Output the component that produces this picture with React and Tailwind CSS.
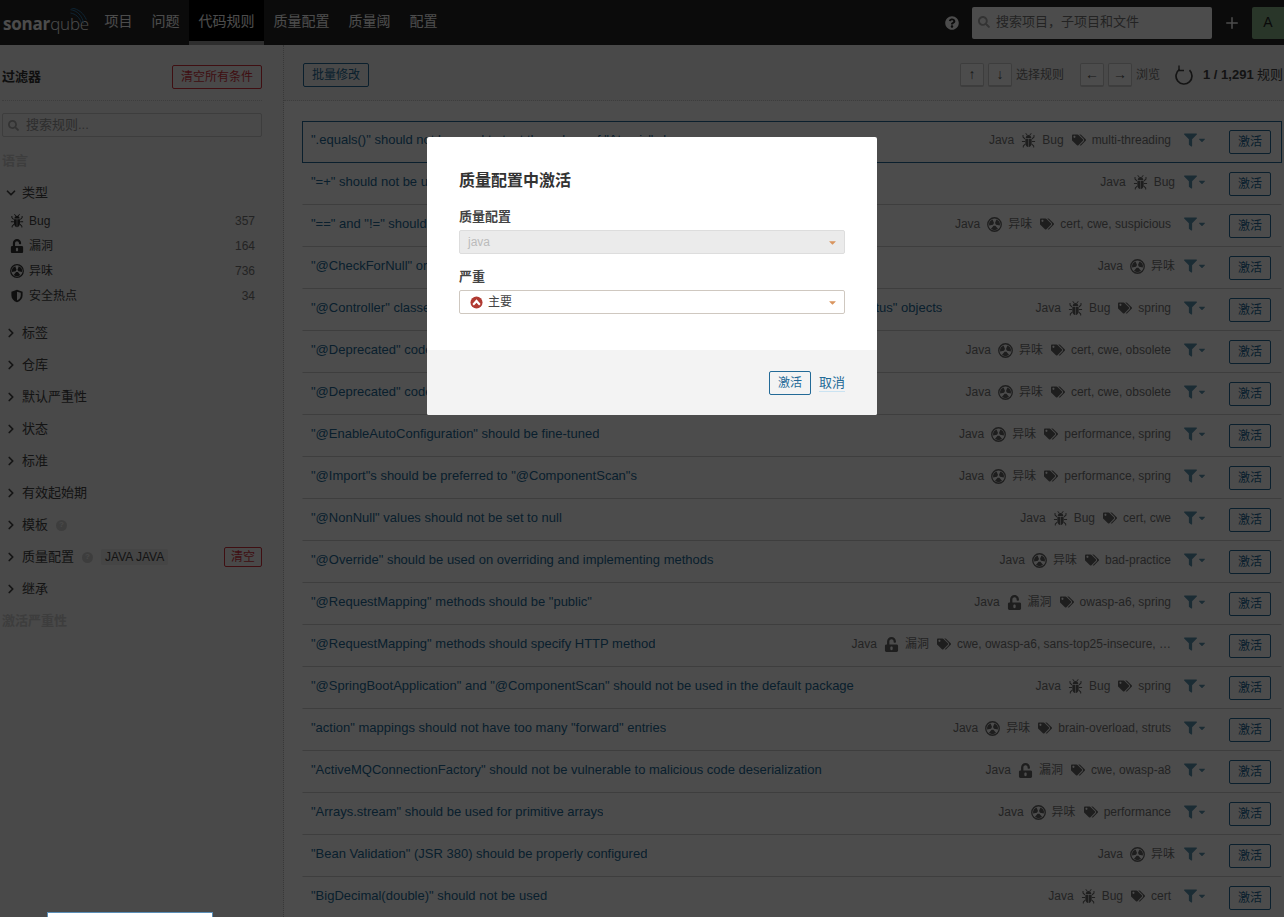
import { FaTags, FaFilter, FaUnlockAlt, FaQuestionCircle, FaSearch, FaCaretDown } from 'react-icons/fa';
import { ChevronDown, ChevronRight, Plus } from 'lucide-react';

const BASE_FONT = "font-['Liberation_Sans','Noto_Sans_CJK_SC',sans-serif]";

const rules = [
  { title: '".equals()" should not be used to test the values of "Atomic" classes', type: 'bug', tags: 'multi-threading', active: true },
  { title: '"=+" should not be used instead of "+="', type: 'bug' },
  { title: '"==" and "!=" should not be used when "equals" is overridden', type: 'smell', tags: 'cert, cwe, suspicious' },
  { title: '"@CheckForNull" or "@Nullable" should not be used on primitive types', type: 'smell' },
  { title: '"@Controller" classes that use "@SessionAttributes" must call "setComplete" on their "SessionStatus" objects', type: 'bug', tags: 'spring' },
  { title: '"@Deprecated" code should not be used', type: 'smell', tags: 'cert, cwe, obsolete' },
  { title: '"@Deprecated" code marked for removal should never be used', type: 'smell', tags: 'cert, cwe, obsolete' },
  { title: '"@EnableAutoConfiguration" should be fine-tuned', type: 'smell', tags: 'performance, spring' },
  { title: '"@Import"s should be preferred to "@ComponentScan"s', type: 'smell', tags: 'performance, spring' },
  { title: '"@NonNull" values should not be set to null', type: 'bug', tags: 'cert, cwe' },
  { title: '"@Override" should be used on overriding and implementing methods', type: 'smell', tags: 'bad-practice' },
  { title: '"@RequestMapping" methods should be "public"', type: 'vuln', tags: 'owasp-a6, spring' },
  { title: '"@RequestMapping" methods should specify HTTP method', type: 'vuln', tags: 'cwe, owasp-a6, sans-top25-insecure, …' },
  { title: '"@SpringBootApplication" and "@ComponentScan" should not be used in the default package', type: 'bug', tags: 'spring' },
  { title: '"action" mappings should not have too many "forward" entries', type: 'smell', tags: 'brain-overload, struts' },
  { title: '"ActiveMQConnectionFactory" should not be vulnerable to malicious code deserialization', type: 'vuln', tags: 'cwe, owasp-a8' },
  { title: '"Arrays.stream" should be used for primitive arrays', type: 'smell', tags: 'performance' },
  { title: '"Bean Validation" (JSR 380) should be properly configured', type: 'smell' },
  { title: '"BigDecimal(double)" should not be used', type: 'bug', tags: 'cert' },
];

const typeLabels = { bug: 'Bug', vuln: '漏洞', smell: '异味' };

const navItems = ['项目', '问题', '代码规则', '质量配置', '质量阈', '配置'];

const closedFacets = ['标签', '仓库', '默认严重性', '状态', '标准', '有效起始期'];

function BugIcon({ className }) {
  return (
    <svg viewBox="0 0 16 16" className={className} fill="currentColor">
      {/* head */}
      <path d="M5 5.2C5.2 3.2 6.4 2 8 2s2.8 1.2 3 3.2z" />
      {/* body, split by a thin seam */}
      <path d="M4.6 6h3.1v9C5.9 14.7 4.6 12.9 4.6 10.6zM8.3 6h3.1v4.6c0 2.3-1.3 4.1-3.1 4.4z" />
      {/* legs */}
      <path d="M4 6.8L1.6 4.4V2.2h1.1v1.7L4.4 5.6zM12 6.8l2.4-2.4V2.2h-1.1v1.7l-1.7 1.7zM1 8.4h3.4v1.1H1zM11.6 8.4H15v1.1h-3.4zM4.4 11.2l-2.5 2.4v1.8H3v-1.3l1.9-1.9zM11.6 11.2l2.5 2.4v1.8H13v-1.3l-1.9-1.9z" />
      {/* antennae */}
      <path d="M4.6.6l.7-.6 1.8 2-.7.6zM11.4.6l-.7-.6-1.8 2 .7.6z" />
    </svg>
  );
}

function ShieldIcon({ className }) {
  return (
    <svg viewBox="0 0 16 16" className={className} fill="currentColor">
      <path d="M8 .8l6.4 2.3v4.4c0 3.5-2.5 6.4-6.4 7.7-3.9-1.3-6.4-4.2-6.4-7.7V3.1zM8 3v10.2c2.6-1.1 4.3-3.2 4.3-5.7V4.4z" />
    </svg>
  );
}

// one blade of the code smell mark, as a ring sector around the icon's centre
function bladePath(centerDeg) {
  const point = (r, deg) => {
    const rad = (deg * Math.PI) / 180;
    return `${(8 + r * Math.cos(rad)).toFixed(2)} ${(8 - r * Math.sin(rad)).toFixed(2)}`;
  };
  const from = centerDeg + 40;
  const to = centerDeg - 40;
  return `M${point(1.6, from)}L${point(5.8, from)}A5.8 5.8 0 0 1 ${point(5.8, to)}L${point(1.6, to)}Z`;
}

function SmellIcon({ className }) {
  return (
    <svg viewBox="0 0 16 16" className={className} fill="currentColor">
      <circle cx="8" cy="8" r="7.2" fill="none" stroke="currentColor" strokeWidth="1.4" />
      <path d={bladePath(150)} />
      <path d={bladePath(30)} />
      <path d={bladePath(270)} />
    </svg>
  );
}

function TypeIcon({ type, className }) {
  if (type === 'bug') return <BugIcon className={className} />;
  if (type === 'vuln') return <FaUnlockAlt className={className} />;
  return <SmellIcon className={className} />;
}

function Logo() {
  return (
    <div className="relative flex h-full w-[95px] items-center pl-[3px] pt-[2px] font-['Open_Sans',sans-serif] text-[17px] leading-none tracking-[-0.2px] text-white">
      <span className="font-bold">sonar</span>
      <span className="font-light">qube</span>
      <svg viewBox="0 0 20 24" className="absolute left-[69px] top-[8px] h-[20px] w-[18px]" fill="none" stroke="#2f7fb5" strokeWidth="1.1">
        <path d="M1 2c8 1 14 7 16 17" />
        <path d="M1 6c6 1 11 5 13 12" />
        <path d="M2 0c9 1 15 7 18 14" />
      </svg>
    </div>
  );
}

function Header() {
  return (
    <header className="flex h-[45px] items-stretch bg-[#262626] text-white">
      <Logo />
      <nav className="flex text-[14px]">
        {navItems.map((item) =>
          item === '代码规则' ? (
            <a key={item} className="flex items-center border-b-4 border-[#999] bg-black px-[9.5px] pt-[2px]">
              {item}
            </a>
          ) : (
            <a key={item} className="flex items-center px-[9.5px] pb-[2px]">
              {item}
            </a>
          )
        )}
      </nav>
      <div className="ml-auto flex items-center">
        <FaQuestionCircle className="mr-[13px] h-[14px] w-[14px]" />
        <div className="flex h-[32px] w-[240px] items-center rounded-[2px] bg-white pb-[2px] pl-[6px] text-[13px] text-[#777]">
          <FaSearch className="mr-[6px] h-[12px] w-[12px] text-[#aaa]" />
          {'搜索项目\uFF0C子项目和文件'}
        </div>
        <Plus className="mx-[11px] h-[18px] w-[18px]" strokeWidth={2} />
        <div className="flex h-[32px] w-[32px] items-center justify-center rounded-l-[2px] bg-[#8ab58a] text-[14px] text-[#222]">A</div>
      </div>
    </header>
  );
}

function FacetTitle({ open, children }) {
  return (
    <div className="flex h-[32px] items-center text-[13px] text-[#444]">
      {open ? (
        <ChevronDown className="ml-[2px] mr-[4px] h-[14px] w-[14px]" strokeWidth={3} />
      ) : (
        <ChevronRight className="ml-[2px] mr-[4px] h-[14px] w-[14px]" strokeWidth={3} />
      )}
      {children}
    </div>
  );
}

function HelpDot() {
  return (
    <span className="ml-2 flex h-[11px] w-[11px] items-center justify-center rounded-full bg-[#cdcdcd] text-[8px] font-bold text-[#f3f3f3]">?</span>
  );
}

function TypeItem({ icon, label, count }) {
  return (
    <div className="flex h-[25px] items-center pl-[8px] pr-[7px] text-[12px] text-[#444]">
      <span className="mr-[5px] flex w-[14px] justify-center">{icon}</span>
      <span>{label}</span>
      <span className="ml-auto text-[#777]">{count}</span>
    </div>
  );
}

function Sidebar() {
  const iconClass = 'h-[14px] w-[14px] text-[#333]';
  return (
    <aside className="w-[284px] shrink-0 border-r border-dotted border-[#bbb] bg-[#f3f3f3] pl-[2px] pr-[21px]">
      <div className="flex h-[56px] items-center justify-between border-b border-dotted border-[#ccc] pt-2 text-[13px] text-[#333]">
        <span className="font-semibold">过滤器</span>
        <button className="flex h-[24px] w-[90px] items-center justify-center rounded-[2px] border border-[#d4333f] text-[12px] text-[#d4333f]">清空所有条件</button>
      </div>
      <div className="mt-3 flex h-[24px] items-center rounded-[2px] border border-[#ccc] pl-[5px] text-[13px] text-[#999]">
        <FaSearch className="mr-[7px] h-[11px] w-[11px] text-[#aaa]" />
        搜索规则...
      </div>
      <div className="mt-2 flex h-[32px] items-center text-[13px] font-semibold text-[#ccc]">语言</div>
      <FacetTitle open>类型</FacetTitle>
      <div className="mb-[9px] -mt-[1px]">
        <TypeItem icon={<BugIcon className={iconClass} />} label="Bug" count="357" />
        <TypeItem icon={<FaUnlockAlt className={iconClass} />} label="漏洞" count="164" />
        <TypeItem icon={<SmellIcon className={iconClass} />} label="异味" count="736" />
        <TypeItem icon={<ShieldIcon className={iconClass} />} label="安全热点" count="34" />
      </div>
      {closedFacets.map((facet) => (
        <FacetTitle key={facet}>{facet}</FacetTitle>
      ))}
      <FacetTitle>
        模板
        <HelpDot />
      </FacetTitle>
      <FacetTitle>
        质量配置
        <HelpDot />
        <span className="ml-2 rounded-[2px] bg-[#e6e6e6] px-1 text-[12px] leading-[16px]">JAVA JAVA</span>
        <button className="ml-auto flex h-[20px] w-[38px] items-center justify-center rounded-[2px] border border-[#d4333f] text-[12px] text-[#d4333f]">清空</button>
      </FacetTitle>
      <FacetTitle>继承</FacetTitle>
      <div className="flex h-[32px] items-center text-[13px] font-semibold text-[#ccc]">激活严重性</div>
    </aside>
  );
}

function KeyBox({ children }) {
  return (
    <span className="flex h-[24px] w-[24px] items-center justify-center rounded-[2px] border border-b-2 border-[#ccc] bg-white text-[14px] text-[#555]">{children}</span>
  );
}

function Toolbar() {
  return (
    <div className="flex h-[56px] items-center border-b border-dotted border-[#ccc] bg-[#f3f3f3] pl-[19px] pr-[1px] pt-1 text-[12px] text-[#777]">
      <button className="flex h-[24px] w-[66px] items-center justify-center rounded-[2px] border border-[#236a97] text-[12px] text-[#236a97]">批量修改</button>
      <div className="ml-auto flex items-center">
        <KeyBox>↑</KeyBox>
        <span className="ml-1"><KeyBox>↓</KeyBox></span>
        <span className="ml-1">选择规则</span>
        <span className="ml-4"><KeyBox>←</KeyBox></span>
        <span className="ml-1"><KeyBox>→</KeyBox></span>
        <span className="ml-1">浏览</span>
        <svg viewBox="0 0 20 20" className="ml-[14px] h-[20px] w-[20px] text-[#444]" fill="none" stroke="currentColor" strokeWidth="1.7">
          <path d="M15.5 5.2A8 8 0 1 1 5.5 4.4" />
          <path d="M5 0.5v5h5" strokeWidth="1.4" />
        </svg>
        <span className="ml-[9px] text-[#444]"><b className="text-[13px]">1 / 1,291</b> <span className="text-[13px]">规则</span></span>
      </div>
    </div>
  );
}

function RuleRow({ rule }) {
  const border = rule.active ? 'border-[#236a97]' : 'border-transparent border-b-[#d0d0d0]';
  return (
    <div className={`flex h-[42px] border ${border} pl-2 pr-[10px] pt-2`}>
      <span className="mt-[1px] truncate text-[13px] leading-[18px] text-[#236a97]">{rule.title}</span>
      <div className="ml-auto mt-[1px] flex h-[18px] shrink-0 items-center whitespace-nowrap pl-2 text-[12px] text-[#777]">
        <span>Java</span>
        <TypeIcon type={rule.type} className="ml-[7px] mr-[6px] h-[15px] w-[15px] text-[#666]" />
        <span className={rule.tags ? '' : 'mr-[-4px]'}>{typeLabels[rule.type]}</span>
        {rule.tags && (
          <span className="flex items-center">
            <FaTags className="ml-2 mr-[6px] h-[14px] w-[14px] text-[#666]" />
            {rule.tags}
          </span>
        )}
        <span className="ml-[13px] flex w-[23px] items-center text-[#5b93b0]">
          <FaFilter className="h-[14px] w-[13px]" />
          <FaCaretDown className="h-[10px] w-[10px]" />
        </span>
      </div>
      <button className="ml-[22px] flex h-[24px] w-[42px] shrink-0 items-center justify-center rounded-[2px] border border-[#236a97] text-[12px] text-[#236a97]">激活</button>
    </div>
  );
}

function SelectBox({ disabled, children }) {
  const tone = disabled ? 'border-[#ddd] bg-[#ebebeb] text-[#bbb]' : 'border-[#cfc8c0] bg-white text-[#444]';
  return (
    <div className={`flex h-[24px] items-center rounded-[2px] border ${tone} pl-2 pr-[6px] text-[12px]`}>
      {children}
      <FaCaretDown className="ml-auto h-[11px] w-[11px] text-[#d9955f]" />
    </div>
  );
}

function ActivateModal() {
  return (
    <div className="absolute left-[427px] top-[137px] h-[278px] w-[450px] overflow-hidden rounded-[2px] bg-white">
      <div className="h-[213px] px-8 pt-[33px]">
        <h2 className="text-[16px] leading-[22px] font-semibold text-[#333]">质量配置中激活</h2>
        <div className="mt-[16px] text-[13px] leading-[18px] font-semibold text-[#444]">质量配置</div>
        <div className="mt-[4px]">
          <SelectBox disabled>java</SelectBox>
        </div>
        <div className="mt-[14px] text-[13px] leading-[18px] font-semibold text-[#444]">严重</div>
        <div className="mt-[4px]">
          <SelectBox>
            <svg viewBox="0 0 14 14" className="ml-[2px] mr-[5px] h-[13px] w-[13px]">
              <circle cx="7" cy="7" r="6.5" fill="#b03a32" />
              <path d="M2.6 8.6L7 3.6l4.4 5-1.6 1.6L7 7.2l-2.8 3z" fill="#fff" />
            </svg>
            主要
          </SelectBox>
        </div>
      </div>
      <div className="flex h-[65px] items-center justify-end gap-2 bg-[#f3f3f3] px-8 pt-[1px]">
        <button className="flex h-[24px] w-[42px] items-center justify-center rounded-[2px] border border-[#236a97] text-[12px] text-[#236a97]">激活</button>
        <a className="border-b border-[#cae3f2] text-[13px] leading-[16px] text-[#236a97]">取消</a>
      </div>
    </div>
  );
}

export default function App() {
  return (
    <div className={`relative h-[917px] w-[1284px] overflow-hidden bg-white ${BASE_FONT}`}>
      <Header />
      <div className="flex h-[872px]">
        <Sidebar />
        <main className="min-w-0 flex-1">
          <Toolbar />
          <div className="ml-[18px] mr-[2px] mt-[20px]">
            {rules.map((rule) => (
              <RuleRow key={rule.title} rule={rule} />
            ))}
          </div>
        </main>
      </div>
      {/* page dim behind the dialog */}
      <div className="absolute inset-0 bg-black/70" />
      <ActivateModal />
      <div className="absolute left-[47px] top-[912px] h-[8px] w-[166px] border border-[#5b8fb8] bg-white" />
    </div>
  );
}
